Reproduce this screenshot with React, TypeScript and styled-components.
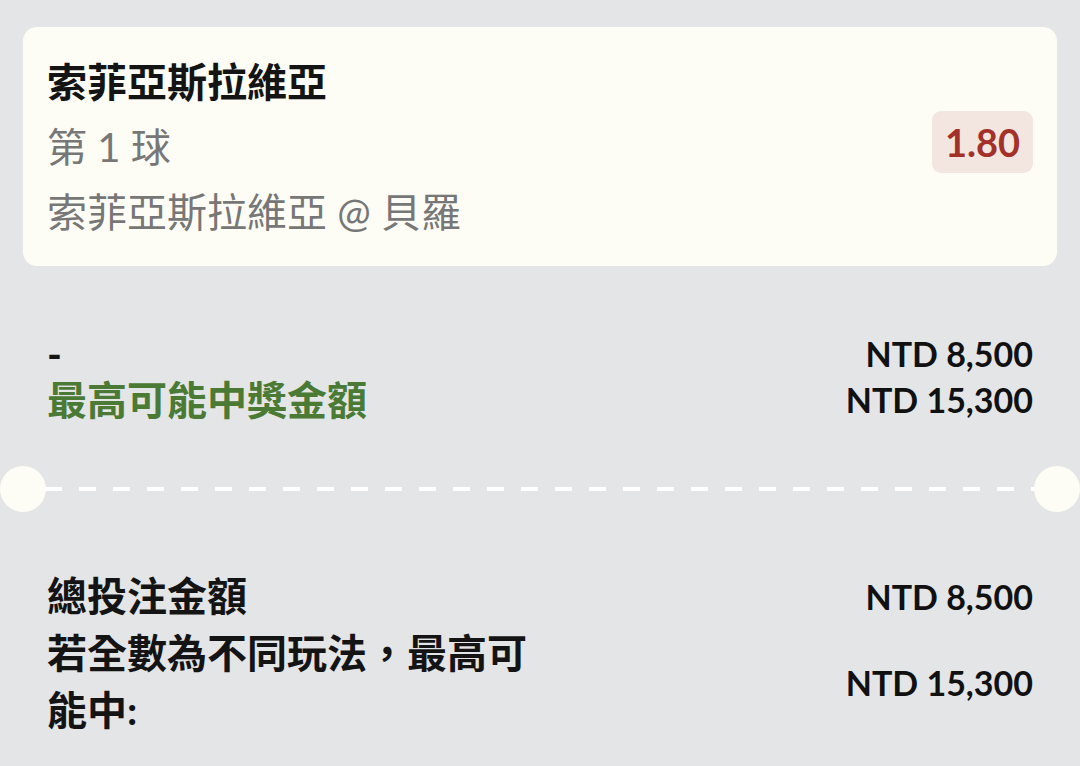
import styled, { createGlobalStyle } from "styled-components";

const GlobalStyle = createGlobalStyle`
    html, body {
        margin: 0;
        padding: 0;
        background: #e4e5e7;
    }

    body {
        font-family: Lato, "Noto Sans CJK TC", sans-serif;
        color: #111111;
    }
`;

const Page = styled.div`
    width: 1080px;
    height: 766px;
    box-sizing: border-box;
    padding: 27px 23px 0;
    overflow: hidden;
    background: #e4e5e7;
`;

const BetCard = styled.div`
    display: flex;
    align-items: center;
    justify-content: space-between;
    height: 239px;
    box-sizing: border-box;
    padding: 20px 24px 18px;
    border-radius: 14px;
    background: #fdfdf5;
`;

const BetInfo = styled.div`
    display: flex;
    flex-direction: column;
`;

const Line = styled.div<{ $strong?: boolean }>`
    font-size: 40px;
    line-height: 65px;
    font-weight: ${(p) => (p.$strong ? 700 : 400)};
    color: ${(p) => (p.$strong ? "#141414" : "#777777")};
    white-space: nowrap;
`;

const OddsBadge = styled.div`
    display: flex;
    align-items: center;
    justify-content: center;
    width: 101px;
    height: 62px;
    margin-top: -12px;
    border-radius: 9px;
    background: #f3e6e0;
    color: #a3312a;
    font-size: 38px;
    font-weight: 700;
`;

const Section = styled.div<{ $lineHeight: number }>`
    display: flex;
    flex-direction: column;
    padding: 0 24px;
    line-height: ${(p) => p.$lineHeight}px;
`;

const Row = styled.div`
    display: flex;
    align-items: center;
    justify-content: space-between;
`;

const Label = styled.div<{ $green?: boolean }>`
    font-size: 40px;
    font-weight: 700;
    color: ${(p) => (p.$green ? "#4b7a35" : "#141414")};
    max-width: 490px;
`;

const Amount = styled.div`
    font-size: 34px;
    font-weight: 700;
    color: #111111;
    white-space: nowrap;
`;

const Divider = styled.div`
    display: flex;
    align-items: center;
    height: 46px;
    margin: 0 -23px;
`;

const Notch = styled.div`
    flex: 0 0 46px;
    height: 46px;
    border-radius: 50%;
    background: #fdfdf5;
`;

const DashLine = styled.div`
    flex: 1;
    height: 4px;
    margin: 0 -1px;
    background: repeating-linear-gradient(
        to right,
        #ffffff 0 17px,
        transparent 17px 34px
    );
`;

export default function App() {
    return (
        <>
            <GlobalStyle />
            <Page>
                <BetCard>
                    <BetInfo>
                        <Line $strong>索菲亞斯拉維亞</Line>
                        <Line>第 1 球</Line>
                        <Line>索菲亞斯拉維亞 @ 貝羅</Line>
                    </BetInfo>
                    <OddsBadge>1.80</OddsBadge>
                </BetCard>

                <Section $lineHeight={46} style={{ marginTop: 65 }}>
                    <Row>
                        <Label>-</Label>
                        <Amount>NTD 8,500</Amount>
                    </Row>
                    <Row>
                        <Label $green>最高可能中獎金額</Label>
                        <Amount>NTD 15,300</Amount>
                    </Row>
                </Section>

                <Divider style={{ marginTop: 43 }}>
                    <Notch />
                    <DashLine />
                    <Notch />
                </Divider>

                <Section $lineHeight={57} style={{ marginTop: 56 }}>
                    <Row>
                        <Label>總投注金額</Label>
                        <Amount>NTD 8,500</Amount>
                    </Row>
                    <Row>
                        <Label>若全數為不同玩法，最高可能中:</Label>
                        <Amount>NTD 15,300</Amount>
                    </Row>
                </Section>
            </Page>
        </>
    );
}
